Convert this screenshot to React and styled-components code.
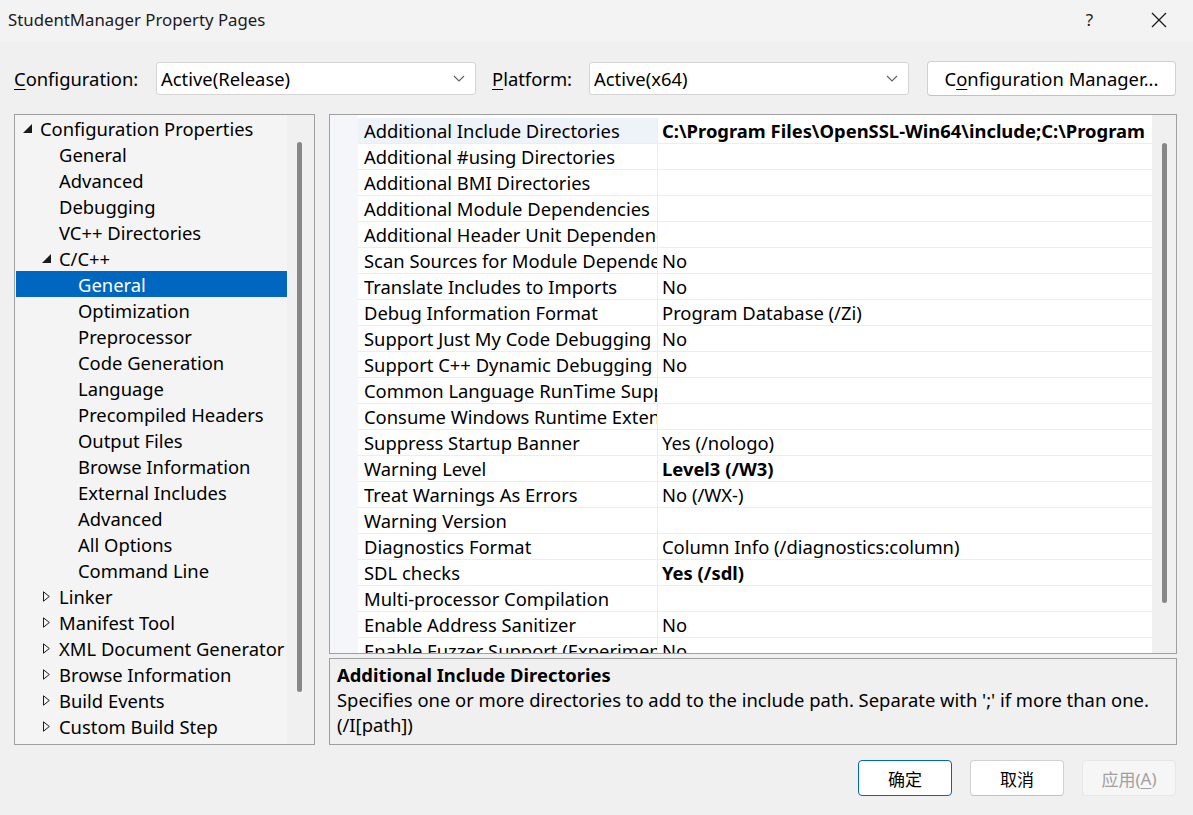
import React from "react";
import styled, { createGlobalStyle } from "styled-components";

const Global = createGlobalStyle`
  html, body {
    margin: 0;
    padding: 0;
    background: #f0f0f0;
  }
  * {
    box-sizing: border-box;
  }
`;

const Window = styled.div`
  width: 1193px;
  height: 815px;
  background: #f0f0f0;
  display: flex;
  flex-direction: column;
  font-family: "Noto Sans", "Noto Sans CJK SC", sans-serif;
  font-size: 18.4px;
  color: #000;
  overflow: hidden;
`;

const TitleBar = styled.div`
  height: 42px;
  display: flex;
  align-items: center;
  padding: 0 0 3px 8px;
  background: #f3f3f3;
`;

const Title = styled.div`
  flex: 1;
  font-size: 16.8px;
  color: #1b1b1b;
`;

const CaptionButton = styled.div`
  width: 69px;
  height: 39px;
  display: flex;
  align-items: center;
  justify-content: center;
  font-size: 17px;
  color: #1b1b1b;
`;

const ConfigBar = styled.div`
  display: flex;
  align-items: center;
  height: 36px;
  margin-top: 18px;
  padding: 0 17px 0 14px;
`;

const Label = styled.div`
  width: ${(p) => p.$width}px;
  margin-left: ${(p) => p.$gap || 0}px;
  white-space: nowrap;
`;

const U = styled.span`
  text-decoration: underline;
  text-underline-offset: 3px;
  text-decoration-thickness: 1px;
`;

const Select = styled.div`
  width: 320px;
  height: 33px;
  background: #fff;
  border: 1px solid #d4d4d4;
  border-radius: 3px;
  display: flex;
  align-items: center;
  justify-content: space-between;
  padding: 0 10px 0 4px;
  white-space: nowrap;
`;

const Button = styled.div`
  height: ${(p) => p.$height || 36}px;
  width: ${(p) => (p.$width ? `${p.$width}px` : "auto")};
  margin-left: ${(p) => p.$gap || 0}px;
  flex: ${(p) => (p.$grow ? 1 : "none")};
  display: flex;
  align-items: center;
  justify-content: center;
  background: ${(p) => (p.$disabled ? "#f6f6f6" : "#fff")};
  border: 1px solid
    ${(p) => (p.$primary ? "#0067c0" : p.$disabled ? "#e6e6e6" : "#d0d0d0")};
  border-bottom-color: ${(p) =>
    p.$primary ? "#0067c0" : p.$disabled ? "#e6e6e6" : "#c2c2c2"};
  border-radius: 4px;
  color: ${(p) => (p.$disabled ? "#a0a0a0" : "#000")};
  font-size: ${(p) => p.$size || 18.4}px;
  white-space: nowrap;
`;

const Main = styled.div`
  display: flex;
  gap: 14px;
  margin-top: 18px;
  padding: 0 16px 0 14px;
  height: 631px;
`;

const Tree = styled.div`
  width: 301px;
  height: 631px;
  border: 1px solid #a0a0a0;
  background: #f0f0f0;
  display: flex;
`;

const TreeList = styled.div`
  width: 272px;
  padding: 0 0 0 1px;
  background: #f4f4f4;
  overflow: hidden;
`;

const TreeRow = styled.div`
  height: 26px;
  display: flex;
  align-items: center;
  padding-left: ${(p) => p.$level * 19 + 5}px;
  background: ${(p) => (p.$selected ? "#0067c0" : "transparent")};
  color: ${(p) => (p.$selected ? "#fff" : "#000")};
  white-space: nowrap;
`;

const Arrow = styled.span`
  width: 19px;
  height: 26px;
  display: flex;
  align-items: center;
  padding-left: ${(p) => (p.$open ? 2 : 3)}px;
  flex: none;
`;

const ScrollTrack = styled.div`
  width: ${(p) => p.$width}px;
  flex: none;
  background: #f0f0f0;
  padding: ${(p) => p.$top}px 0 0 10px;
`;

const Thumb = styled.div`
  width: 5px;
  height: ${(p) => p.$height}px;
  border-radius: 3px;
  background: #878787;
`;

const RightColumn = styled.div`
  flex: 1;
  display: flex;
  flex-direction: column;
  gap: 4px;
`;

const Grid = styled.div`
  height: 540px;
  border: 1px solid #a0a0a0;
  background: #fff;
  display: flex;
  flex: none;
`;

const Gutter = styled.div`
  width: 28px;
  flex: none;
  background: #f4f6fa;
`;

const Rows = styled.div`
  flex: 1;
  padding-top: 3px;
  overflow: hidden;
`;

const PropRow = styled.div`
  height: 26px;
  display: grid;
  grid-template-columns: 300px 1fr;
  border-bottom: 1px solid #ededed;
`;

const Cell = styled.div`
  padding-left: ${(p) => (p.$value ? 4 : 6)}px;
  line-height: 25px;
  white-space: nowrap;
  overflow: hidden;
  font-weight: ${(p) => (p.$bold ? 700 : 400)};
  background: ${(p) => (p.$active ? "#eef3fa" : "transparent")};
  border-right: ${(p) => (p.$value ? "none" : "1px solid #ededed")};
`;

const Desc = styled.div`
  flex: 1;
  border: 1px solid #a0a0a0;
  padding: 3px 7px;
  line-height: 25px;
`;

const DescTitle = styled.div`
  font-weight: 700;
`;

const Footer = styled.div`
  display: flex;
  justify-content: flex-end;
  gap: 18px;
  padding: 15px 17px 0 0;
`;

const Chevron = () => (
  <svg width="12" height="7" viewBox="0 0 12 7">
    <path d="M1 1 L6 6 L11 1" fill="none" stroke="#606060" strokeWidth="1.1" />
  </svg>
);

const CloseIcon = () => (
  <svg width="16" height="16" viewBox="0 0 16 16">
    <path d="M1 1 L15 15 M15 1 L1 15" stroke="#1b1b1b" strokeWidth="1.3" />
  </svg>
);

const OpenArrow = () => (
  <svg width="9" height="9" viewBox="0 0 9 9">
    <path d="M9 0 L9 9 L0 9 Z" fill="#1a1a1a" />
  </svg>
);

const ClosedArrow = () => (
  <svg width="7" height="11" viewBox="0 0 7 11">
    <path d="M0.5 0.8 L6.3 5.5 L0.5 10.2 Z" fill="none" stroke="#1a1a1a" strokeWidth="1" />
  </svg>
);

const treeItems = [
  { label: "Configuration Properties", level: 0, arrow: "open" },
  { label: "General", level: 1 },
  { label: "Advanced", level: 1 },
  { label: "Debugging", level: 1 },
  { label: "VC++ Directories", level: 1 },
  { label: "C/C++", level: 1, arrow: "open" },
  { label: "General", level: 2, selected: true },
  { label: "Optimization", level: 2 },
  { label: "Preprocessor", level: 2 },
  { label: "Code Generation", level: 2 },
  { label: "Language", level: 2 },
  { label: "Precompiled Headers", level: 2 },
  { label: "Output Files", level: 2 },
  { label: "Browse Information", level: 2 },
  { label: "External Includes", level: 2 },
  { label: "Advanced", level: 2 },
  { label: "All Options", level: 2 },
  { label: "Command Line", level: 2 },
  { label: "Linker", level: 1, arrow: "closed" },
  { label: "Manifest Tool", level: 1, arrow: "closed" },
  { label: "XML Document Generator", level: 1, arrow: "closed" },
  { label: "Browse Information", level: 1, arrow: "closed" },
  { label: "Build Events", level: 1, arrow: "closed" },
  { label: "Custom Build Step", level: 1, arrow: "closed" },
];

const properties = [
  ["Additional Include Directories", "C:\\Program Files\\OpenSSL-Win64\\include;C:\\Program", true],
  ["Additional #using Directories", ""],
  ["Additional BMI Directories", ""],
  ["Additional Module Dependencies", ""],
  ["Additional Header Unit Dependencies", ""],
  ["Scan Sources for Module Dependencies", "No"],
  ["Translate Includes to Imports", "No"],
  ["Debug Information Format", "Program Database (/Zi)"],
  ["Support Just My Code Debugging", "No"],
  ["Support C++ Dynamic Debugging", "No"],
  ["Common Language RunTime Support", ""],
  ["Consume Windows Runtime Extension", ""],
  ["Suppress Startup Banner", "Yes (/nologo)"],
  ["Warning Level", "Level3 (/W3)", true],
  ["Treat Warnings As Errors", "No (/WX-)"],
  ["Warning Version", ""],
  ["Diagnostics Format", "Column Info (/diagnostics:column)"],
  ["SDL checks", "Yes (/sdl)", true],
  ["Multi-processor Compilation", ""],
  ["Enable Address Sanitizer", "No"],
  ["Enable Fuzzer Support (Experimental)", "No"],
];

const App = () => {
  return (
    <Window>
      <Global />
      <TitleBar>
        <Title>StudentManager Property Pages</Title>
        <CaptionButton>?</CaptionButton>
        <CaptionButton>
          <CloseIcon />
        </CaptionButton>
      </TitleBar>

      <ConfigBar>
        <Label $width={142}>
          <U>C</U>onfiguration:
        </Label>
        <Select>
          <span>Active(Release)</span>
          <Chevron />
        </Select>
        <Label $width={97} $gap={16}>
          <U>P</U>latform:
        </Label>
        <Select>
          <span>Active(x64)</span>
          <Chevron />
        </Select>
        <Button $height={35} $gap={18} $grow>
          C<U>o</U>nfiguration Manager...
        </Button>
      </ConfigBar>

      <Main>
        <Tree>
          <TreeList>
            {treeItems.map((item, i) => (
              <TreeRow key={i} $level={item.level} $selected={item.selected}>
                <Arrow $open={item.arrow === "open"}>
                  {item.arrow === "open" && <OpenArrow />}
                  {item.arrow === "closed" && <ClosedArrow />}
                </Arrow>
                {item.label}
              </TreeRow>
            ))}
          </TreeList>
          <ScrollTrack $width={27} $top={27}>
            <Thumb $height={550} />
          </ScrollTrack>
        </Tree>

        <RightColumn>
          <Grid>
            <Gutter />
            <Rows>
              {properties.map(([name, value, bold], i) => (
                <PropRow key={i}>
                  <Cell $active={i === 0}>{name}</Cell>
                  <Cell $value $bold={bold}>
                    {value}
                  </Cell>
                </PropRow>
              ))}
            </Rows>
            <ScrollTrack $width={24} $top={28}>
              <Thumb $height={460} />
            </ScrollTrack>
          </Grid>
          <Desc>
            <DescTitle>Additional Include Directories</DescTitle>
            <div>
              Specifies one or more directories to add to the include path. Separate with ';' if more than one.
            </div>
            <div>(/I[path])</div>
          </Desc>
        </RightColumn>
      </Main>

      <Footer>
        <Button $width={94} $primary $size={17}>
          确定
        </Button>
        <Button $width={94} $size={17}>
          取消
        </Button>
        <Button $width={94} $disabled $size={17}>
          应用(<U>A</U>)
        </Button>
      </Footer>
    </Window>
  );
};

export default App;
